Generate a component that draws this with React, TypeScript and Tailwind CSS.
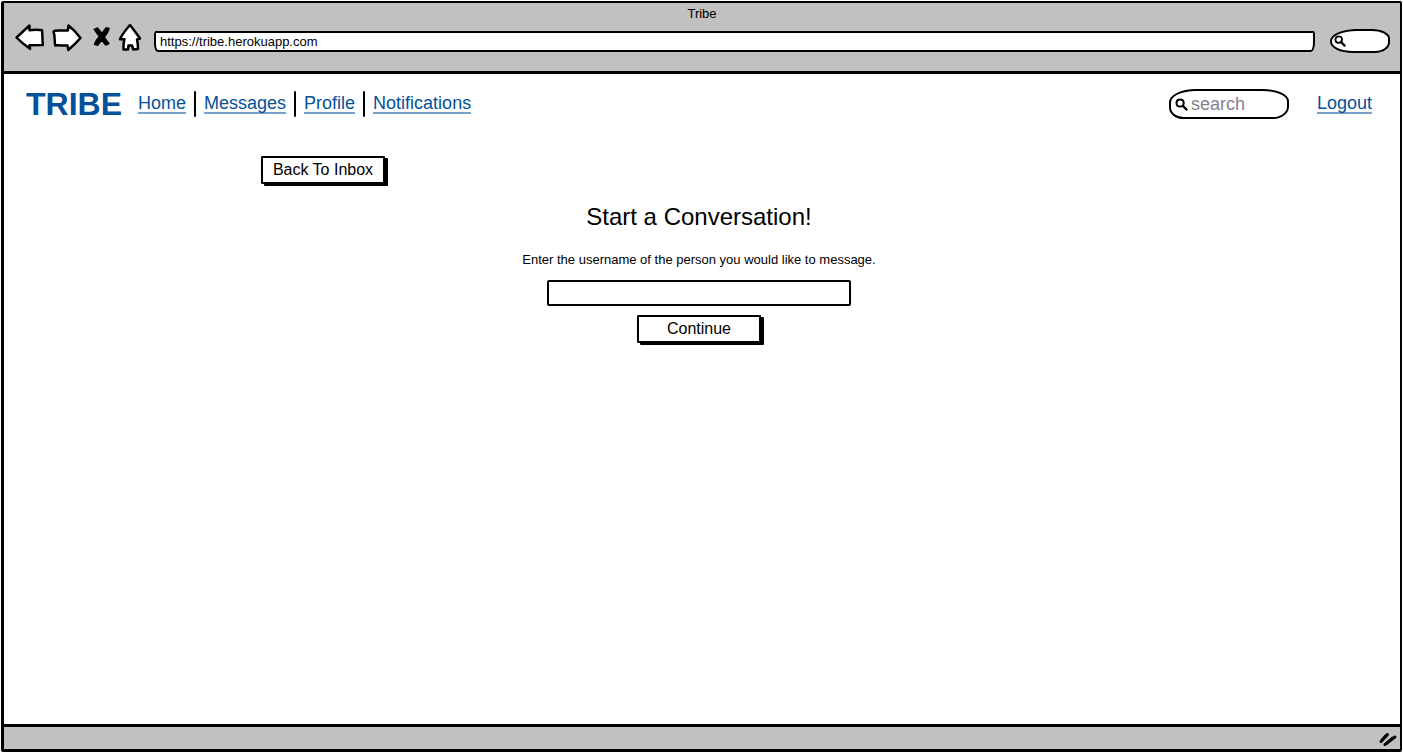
import type { ReactNode } from "react";

const navLinks = ["Home", "Messages", "Profile", "Notifications"];

function Outline({ width, d, label }: { width: number; d: string; label: string }) {
  return (
    <button type="button" aria-label={label} className="shrink-0">
      <svg width={width} height="30" viewBox={`0 0 ${width} 30`} fill="#fff" stroke="#000" strokeWidth="2.5" strokeLinejoin="round" strokeLinecap="round">
        <path d={d} />
      </svg>
    </button>
  );
}

function Magnifier({ size }: { size: number }) {
  return (
    <svg width={size} height={size} viewBox="0 0 13 13" fill="none" stroke="#000" strokeLinecap="round" aria-hidden="true" className="shrink-0">
      <path d="M5 1.5C7.2 1.3 8.8 2.8 8.7 5C8.7 7.2 7.2 8.6 5 8.6C2.9 8.6 1.5 7.2 1.5 5C1.5 3 2.9 1.6 5 1.5Z" strokeWidth="2" />
      <path d="M8 8L11.5 11.5" strokeWidth="2.4" />
    </svg>
  );
}

function SketchButton({ children, type = "button" }: { children: ReactNode; type?: "button" | "submit" }) {
  return (
    <button type={type} className="h-7 w-[124px] rounded-[1px] border-2 border-black bg-white text-[16px] leading-6 whitespace-nowrap shadow-[3px_2px_0_#000]">
      {children}
    </button>
  );
}

function BrowserBar() {
  return (
    <header className="flex h-[71px] flex-col border-b-[3px] border-black bg-[#c1c1c1]">
      <p className="h-5 text-center text-[13px] leading-[22px]">Tribe</p>
      <div className="flex h-[30px] items-center pr-[10px] pl-[10px]">
        <Outline label="Back" width={32} d="M2.5 14.5L15.5 2.5L15.5 7.2C19.7 7 24 6.4 28 7.3C28.7 12 28.3 17 28.8 22L15.5 22.2L16 25.8C11 22.3 6.5 18.6 2.5 14.5Z" />
        <span className="w-[5px]" />
        <Outline label="Forward" width={32} d="M3.5 7.8C8 7 12.4 7.8 16.8 7.5L17.5 2.5C22 6 26 10.3 29.5 15C25.5 19.5 21.5 23.4 17.3 27L16.5 22.4C12.3 23.2 8.3 21.6 4.3 22.5C3 17.6 4.5 12.6 2.5 8.8Z" />
        <span className="w-[8px]" />
        <button type="button" aria-label="Stop" className="shrink-0">
          <svg width="22" height="30" viewBox="0 0 22 30" fill="#000" stroke="#000" strokeWidth="1.4" strokeLinejoin="round">
            <path d="M3.2 6.3L6.5 5L11 10.5L15 4.8L18.2 5.4C17.5 8.5 15.5 11.5 13.2 14.2L18 20.6L14.8 22L10.6 17.2L6.6 22.3L3.5 21.3C4.5 18.5 6 16 8.3 13.5Z" />
          </svg>
        </button>
        <span className="w-[5px]" />
        <Outline label="Home page" width={26} d="M12 2C15.3 6 18.6 11 22 15.5L19 16.5C19.8 19.7 20 23 20 26L15.3 26.5L14 22.5L10.5 22.5L10 26.5L5.5 26.5C5.4 23 5.4 19.5 6.5 16.2L2 16.2C4.2 11.2 8 6.5 12 2Z" />
        <input
          type="text"
          aria-label="Address"
          defaultValue="https://tribe.herokuapp.com"
          className="mt-[6px] ml-[10px] h-[21px] min-w-0 flex-1 rounded-[2px_2px_4px_4px/5px_3px_10px_8px] border-2 border-black bg-white px-1 text-[13px] outline-none"
        />
        <label className="mt-[6px] ml-[15px] flex h-6 w-[60px] items-center rounded-[45%_30%_25%_38%/50%_40%_45%_48%] border-2 border-black bg-white pl-[2px]">
          <Magnifier size={12} />
          <input type="search" aria-label="Web search" className="w-8 min-w-0 outline-none" />
        </label>
      </div>
    </header>
  );
}

export default function App() {
  return (
    <div className="flex min-h-screen bg-white pt-px pr-px pb-px pl-px font-['Liberation_Sans',Arial,sans-serif] text-black">
      <div className="flex flex-1 flex-col rounded-[2px] border-2 border-b-[3px] border-l-[3px] border-black">
        <BrowserBar />
        <div className="flex h-[60px] items-center pr-7 pl-[22px]">
          <h1 className="text-[32px] leading-9 font-bold text-[#04519b]">TRIBE</h1>
          <nav className="ml-2 flex">
            {navLinks.map((name, i) => (
              <div key={name} className="flex items-center">
                {i > 0 && <span className="h-[26px] w-[2px] rounded-full bg-black" />}
                <a href="#" className="mx-2 border-b-2 border-[#78a2cc] text-[18px] leading-[18px] text-[#04519b]">
                  {name}
                </a>
              </div>
            ))}
          </nav>
          <label className="ml-auto flex h-[30px] w-[120px] items-center rounded-[22%_22%_13%_12%/45%_40%_42%_38%] border-2 border-black pl-1">
            <Magnifier size={13} />
            <input
              type="search"
              aria-label="Search"
              placeholder="search"
              className="ml-[3px] min-w-0 flex-1 text-[18px] leading-5 outline-none placeholder:text-[#83828d] placeholder:opacity-100"
            />
          </label>
          <a href="#" className="ml-7 border-b-2 border-[#78a2cc] text-[18px] leading-[18px] text-[#04519b]">
            Logout
          </a>
        </div>
        <main className="flex flex-1 justify-center pr-[6px]">
          <div className="flex w-[876px] flex-col items-start pt-[22px]">
            <SketchButton>Back To Inbox</SketchButton>
            <form className="flex w-full flex-col items-center" onSubmit={(e) => e.preventDefault()}>
              <h2 className="mt-[17px] text-[24px] leading-8">Start a Conversation!</h2>
              <label htmlFor="username" className="mt-[17px] text-[13px] leading-5">
                Enter the username of the person you would like to message.
              </label>
              <input id="username" type="text" className="mt-[10px] mb-[9px] h-[26px] w-[304px] rounded-[2px] border-2 border-black px-1 text-[13px] outline-none" />
              <SketchButton type="submit">Continue</SketchButton>
            </form>
          </div>
        </main>
        <footer className="flex h-[25px] items-center justify-end border-t-[3px] border-black bg-[#c1c1c1] pr-[2px]">
          <svg width="20" height="18" viewBox="0 0 20 18" fill="none" stroke="#000" strokeWidth="3" strokeLinecap="round" aria-hidden="true">
            <path d="M3 12.5C5 10.5 7 7.5 9.5 5.5M7 15.5C10 14 13 10.5 17 8" />
            <path d="M5 10L8 7M9 14L14.5 9" />
          </svg>
        </footer>
      </div>
    </div>
  );
}
